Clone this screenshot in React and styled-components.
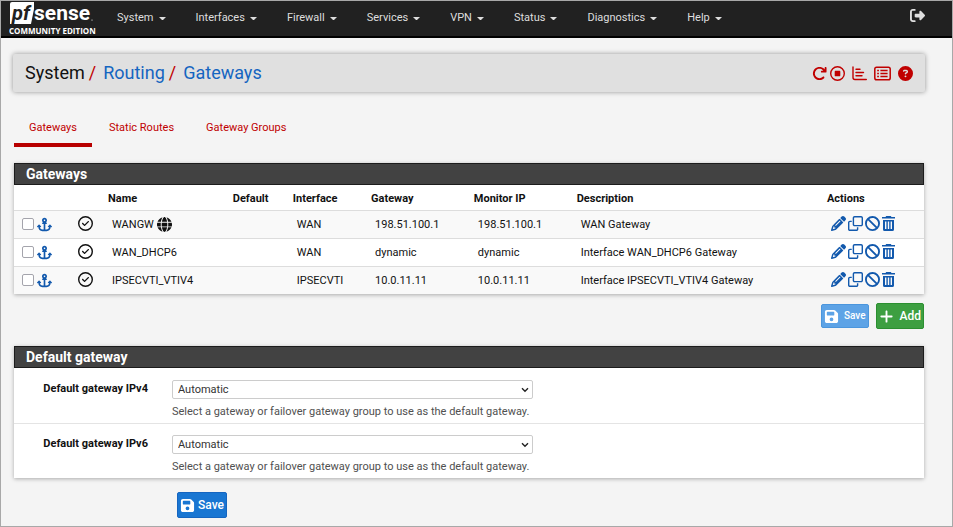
import React from "react";
import styled, { createGlobalStyle } from "styled-components";
import {
  FaAnchor,
  FaArrowRotateRight,
  FaBan,
  FaCircleQuestion,
  FaFloppyDisk,
  FaGlobe,
  FaPencil,
  FaPlus,
  FaRegCircleCheck,
  FaRegCircleStop,
  FaRegClone,
  FaRightFromBracket,
} from "react-icons/fa6";

const GlobalStyle = createGlobalStyle`
  *, *::before, *::after { box-sizing: border-box; }
  body {
    margin: 0;
    background: #f4f4f4;
    color: #111;
    font-family: Roboto, "Liberation Sans", sans-serif;
    font-size: 11px;
    line-height: 16px;
  }
  button, input, select { font: inherit; }
  svg { display: block; }
`;

const Page = styled.div`
  min-height: 100vh;
  border: 1px solid #a8a8a8;
`;

const Navbar = styled.header`
  display: flex;
  align-items: flex-start;
  height: 37px;
  padding-left: 8px;
  background: #212121;
  border-bottom: 2px solid #000;
`;

const Brand = styled.a`
  width: 93px;
`;

const Menu = styled.nav`
  display: flex;
  flex: 1;
`;

const MenuButton = styled.button`
  display: flex;
  align-items: center;
  gap: 5px;
  padding: 9px 15px 7px;
  border: 0;
  background: none;
  color: #dedede;
  cursor: pointer;

  &::after {
    content: "";
    width: 7px;
    border: 3px solid transparent;
    border-top-color: currentColor;
    border-bottom: 0;
  }
`;

const Logout = styled.a`
  padding: 7px 27px 0 0;
  color: #e0e0e0;
  font-size: 15px;
`;

const Main = styled.main`
  padding: 16px 28px 7px 13px;
`;

const TitleBar = styled.div`
  display: flex;
  align-items: center;
  justify-content: space-between;
  height: 38px;
  margin: 0 -1px;
  padding: 0 12px;
  border-radius: 2px;
  background: #e0e0e0;
  box-shadow: 0 0 5px rgba(0, 0, 0, 0.4);
`;

const Crumbs = styled.ol`
  display: flex;
  margin: 0;
  padding: 0;
  list-style: none;
  font-size: 18px;
  line-height: 24px;

  li + li::before {
    content: "/";
    padding: 0 7px 0 4px;
    color: #c00000;
  }

  a {
    color: #1565c0;
    text-decoration: none;
  }
`;

const Shortcuts = styled.div`
  display: flex;
  align-items: center;
  gap: 7px;
  font-size: 15px;

  a { color: #c00000; }
  a:first-child { margin-right: -4px; }
`;

const Tabs = styled.nav`
  display: flex;
  gap: 2px;
  margin-top: 19px;
`;

const Tab = styled.a`
  padding: 9px 15px 7px;
  border-bottom: 4px solid ${(p) => (p.$active ? "#b80000" : "transparent")};
  color: #c00000;
  text-decoration: none;
`;

const Panel = styled.section`
  margin-top: ${(p) => p.$gap}px;
  background: #fff;
  box-shadow: 0 1px 4px rgba(0, 0, 0, 0.3);
`;

const PanelHeading = styled.h2`
  margin: 0;
  padding: 2px 11px;
  border: 1px solid #1c1c1c;
  background: #424242;
  color: #fff;
  font-size: 14px;
  font-weight: 700;
  line-height: 16px;
`;

const Table = styled.table`
  width: 100%;
  table-layout: fixed;
  border-collapse: collapse;

  th {
    height: 25px;
    padding: 4px 4px 0;
    text-align: left;
    font-weight: 700;
  }
  td {
    height: 28px;
    padding: 2px 8px 0;
    border-top: 1px solid #ddd;
    white-space: nowrap;
  }
  tbody tr:nth-child(odd) { background: #f9f9f9; }
`;

const Col = styled.col`
  width: ${(p) => p.$w};
`;

const IconRow = styled.div`
  display: flex;
  align-items: center;
  gap: ${(p) => p.$gap}px;
  padding-bottom: 4px;
  color: ${(p) => p.$color || "#1259ad"};
  font-size: 15px;

  a { color: inherit; }
`;

const SelectRow = styled(IconRow)`
  padding-bottom: 2px;
`;

const NameCell = styled.div`
  display: flex;
  align-items: center;
  gap: 3px;

  svg {
    margin-bottom: 2px;
    font-size: 15px;
  }
`;

const Checkbox = styled.input`
  appearance: none;
  width: 12px;
  height: 12px;
  margin: 0;
  border: 1px solid #a4a4ac;
  border-radius: 2px;
  background: #fff;

  &:checked { background: #1565c0; }
`;

const Toolbar = styled.div`
  display: flex;
  align-items: center;
  justify-content: flex-end;
  gap: 7px;
  margin-top: 9px;
`;

const Button = styled.button`
  display: flex;
  align-items: center;
  gap: ${(p) => p.$gap}px;
  height: 26px;
  padding: 0 2px;
  border: 1px solid ${(p) => p.$edge};
  border-radius: 2px;
  background: ${(p) => p.$fill};
  color: #fff;
  font-size: 12px;
  font-weight: 500;
  cursor: pointer;

  svg { font-size: 15px; }
`;

const SmallButton = styled(Button)`
  height: 24px;
  font-size: 10px;
`;

const Field = styled.div`
  display: grid;
  grid-template-columns: 134px 1fr;
  column-gap: 24px;
  padding: 12px 0 3px;

  & + & {
    padding-top: 11px;
    border-top: 1px solid #e4e4e4;
  }
`;

const FieldLabel = styled.label`
  padding-top: 1px;
  text-align: right;
  font-weight: 700;
`;

const SelectWrap = styled.div`
  display: grid;
  width: 48%;
  align-items: center;

  & > * { grid-area: 1 / 1; }
  svg {
    justify-self: end;
    margin-right: 4px;
    pointer-events: none;
  }
`;

const Select = styled.select`
  appearance: none;
  width: 100%;
  height: 19px;
  padding: 0 5px;
  border: 1px solid #ccc;
  border-radius: 2px;
  background: #fff;
  color: #333;
`;

const Help = styled.p`
  margin: 5px 0 0;
  color: #505050;
`;

const FormActions = styled.div`
  display: flex;
  margin: 14px 0 0 163px;
`;

const Logo = () => (
  <svg width="88" height="35" viewBox="0 0 88 35" role="img" aria-label="pfSense Community Edition">
    <path d="M3 1H25V8L22 23H1V3Q1 1 3 1Z" fill="#fff" />
    <text x="3" y="19" fontFamily="Roboto" fontSize="20" fontWeight="700" fontStyle="italic" fill="#212121">pf</text>
    <text x="25" y="19" fontFamily="Roboto" fontSize="21" fontWeight="700" fill="#fff">sense</text>
    <circle cx="83" cy="19" r="0.6" fill="#fff" />
    <text x="0" y="33" fontFamily="Open Sans" fontSize="8" fontWeight="700" fill="#fff">COMMUNITY EDITION</text>
  </svg>
);

const ChartIcon = () => (
  <svg width="15" height="15" viewBox="0 0 15 15" fill="none" stroke="currentColor" strokeWidth="1.4" strokeLinecap="round">
    <path d="M1 1V11.5Q1 13.5 3 13.5H14.3M4 3.2H8M4 6.5H11.5M4 9.8H10" />
  </svg>
);

const ListIcon = () => (
  <svg width="17" height="15" viewBox="0 0 17 15" fill="none" stroke="currentColor" strokeWidth="1.5">
    <rect x="0.8" y="1.3" width="15.4" height="12.4" rx="1.8" />
    <path d="M3.2 4.5H4.9M3.2 7.5H4.9M3.2 10.5H4.9M6.4 4.5H13.6M6.4 7.5H13.6M6.4 10.5H13.6" />
  </svg>
);

const TrashIcon = () => (
  <svg width="13" height="15" viewBox="0 0 13 15" fill="currentColor">
    <path d="M4.2 0H8.8L9.5 1H13V2.6H0V1H3.5Z" />
    <path fillRule="evenodd" d="M1 4H12V13.4Q12 15 10.4 15H2.6Q1 15 1 13.4ZM3 5.4V13H4.4V5.4ZM5.8 5.4V13H7.2V5.4ZM8.6 5.4V13H10V5.4Z" />
  </svg>
);

const Chevron = () => (
  <svg width="8" height="6" viewBox="0 0 8 6" fill="none" stroke="#222" strokeWidth="1.4">
    <path d="M1 1.2L4 4.2L7 1.2" />
  </svg>
);

const menus = ["System", "Interfaces", "Firewall", "Services", "VPN", "Status", "Diagnostics", "Help"];

const shortcuts = [
  ["Restart service", FaArrowRotateRight],
  ["Stop service", FaRegCircleStop],
  ["Status", ChartIcon],
  ["Logs", ListIcon],
  ["Help", FaCircleQuestion],
];

const actions = [
  ["Edit", FaPencil],
  ["Copy", FaRegClone],
  ["Disable", FaBan],
  ["Delete", TrashIcon],
];

const columns = [
  ["", "6.1%"],
  ["", "3.8%"],
  ["Name", "13.7%"],
  ["Default", "6.6%"],
  ["Interface", "8.6%"],
  ["Gateway", "11.3%"],
  ["Monitor IP", "11.3%"],
  ["Description", "27.5%"],
  ["Actions", "11.1%"],
];

const gateways = [
  { name: "WANGW", isDefault: true, iface: "WAN", ip: "198.51.100.1", text: "WAN Gateway" },
  { name: "WAN_DHCP6", iface: "WAN", ip: "dynamic", text: "Interface WAN_DHCP6 Gateway" },
  { name: "IPSECVTI_VTIV4", iface: "IPSECVTI", ip: "10.0.11.11", text: "Interface IPSECVTI_VTIV4 Gateway" },
];

const fields = [
  ["gw4", "Default gateway IPv4"],
  ["gw6", "Default gateway IPv6"],
];

export default function App() {
  return (
    <Page>
      <GlobalStyle />
      <Navbar>
        <Brand href="#"><Logo /></Brand>
        <Menu>
          {menus.map((m) => <MenuButton key={m} type="button">{m}</MenuButton>)}
        </Menu>
        <Logout href="#" aria-label="Log out"><FaRightFromBracket /></Logout>
      </Navbar>
      <Main>
        <TitleBar>
          <Crumbs>
            <li>System</li>
            <li><a href="#">Routing</a></li>
            <li><a href="#">Gateways</a></li>
          </Crumbs>
          <Shortcuts>
            {shortcuts.map(([label, Icon]) => (
              <a key={label} href="#" aria-label={label}><Icon /></a>
            ))}
          </Shortcuts>
        </TitleBar>
        <Tabs>
          <Tab href="#" $active>Gateways</Tab>
          <Tab href="#">Static Routes</Tab>
          <Tab href="#">Gateway Groups</Tab>
        </Tabs>
        <Panel $gap={16}>
          <PanelHeading>Gateways</PanelHeading>
          <Table>
            <colgroup>
              {columns.map(([, w], i) => <Col key={i} $w={w} />)}
            </colgroup>
            <thead>
              <tr>{columns.map(([title], i) => <th key={i}>{title}</th>)}</tr>
            </thead>
            <tbody>
              {gateways.map((g) => (
                <tr key={g.name}>
                  <td>
                    <SelectRow $gap={3}>
                      <Checkbox type="checkbox" aria-label={`Select ${g.name}`} />
                      <a href="#" aria-label="Move"><FaAnchor /></a>
                    </SelectRow>
                  </td>
                  <td><IconRow $color="#111"><FaRegCircleCheck /></IconRow></td>
                  <td><NameCell>{g.name}{g.isDefault && <FaGlobe />}</NameCell></td>
                  <td />
                  <td>{g.iface}</td>
                  <td>{g.ip}</td>
                  <td>{g.ip}</td>
                  <td>{g.text}</td>
                  <td>
                    <IconRow $gap={2}>
                      {actions.map(([label, Icon]) => (
                        <a key={label} href="#" aria-label={label}><Icon /></a>
                      ))}
                    </IconRow>
                  </td>
                </tr>
              ))}
            </tbody>
          </Table>
        </Panel>
        <Toolbar>
          <SmallButton type="button" $gap={5} $fill="#5da3e6" $edge="#4b96dd"><FaFloppyDisk />Save</SmallButton>
          <Button type="button" $gap={6} $fill="#3d9f41" $edge="#2b8f30"><FaPlus />Add</Button>
        </Toolbar>
        <Panel $gap={17}>
          <PanelHeading>Default gateway</PanelHeading>
          {fields.map(([id, label]) => (
            <Field key={id}>
              <FieldLabel htmlFor={id}>{label}</FieldLabel>
              <div>
                <SelectWrap>
                  <Select id={id}><option>Automatic</option></Select>
                  <Chevron />
                </SelectWrap>
                <Help>Select a gateway or failover gateway group to use as the default gateway.</Help>
              </div>
            </Field>
          ))}
        </Panel>
        <FormActions>
          <Button type="button" $gap={3} $fill="#1976d2" $edge="#1565c0"><FaFloppyDisk />Save</Button>
        </FormActions>
      </Main>
    </Page>
  );
}
